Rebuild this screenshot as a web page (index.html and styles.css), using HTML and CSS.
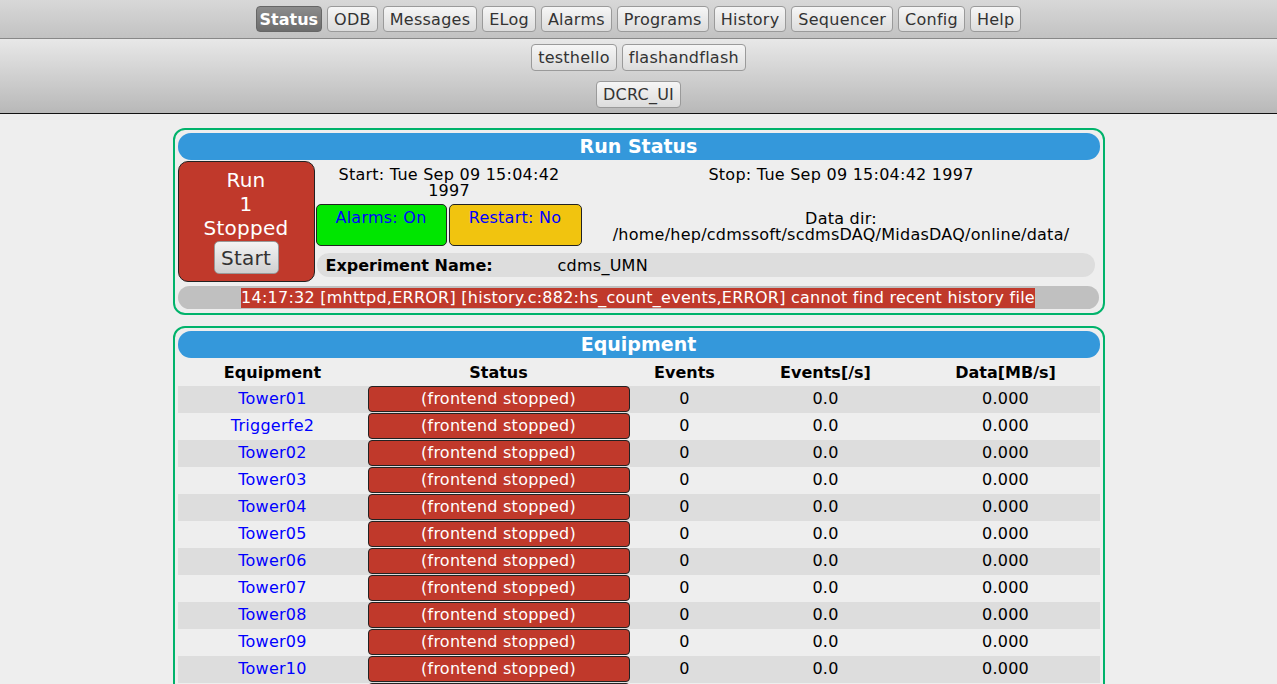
FILE: index.html
```html
<!DOCTYPE html>
<html>
<head>
<meta charset="utf-8">
<title>Status</title>
<link rel="stylesheet" href="styles.css">
</head>
<body>
<div class="header">
  <div class="navtop">
    <span class="nbtn active">Status</span>
    <span class="nbtn">ODB</span>
    <span class="nbtn">Messages</span>
    <span class="nbtn">ELog</span>
    <span class="nbtn">Alarms</span>
    <span class="nbtn">Programs</span>
    <span class="nbtn">History</span>
    <span class="nbtn">Sequencer</span>
    <span class="nbtn">Config</span>
    <span class="nbtn">Help</span>
  </div>
  <div class="navsub">
    <div class="navrow">
      <span class="nbtn sub">testhello</span>
      <span class="nbtn sub">flashandflash</span>
    </div>
    <div class="navrow">
      <span class="nbtn sub">DCRC_UI</span>
    </div>
  </div>
</div>

<div class="content">
  <div class="mtable">
    <div class="mheader">Run Status</div>
    <div class="rungrid">
      <div class="runbox">
        <div class="runtext">Run<br>1<br>Stopped</div>
        <span class="startbtn">Start</span>
      </div>
      <div class="cell starttime">Start: Tue Sep 09 15:04:42<br>1997</div>
      <div class="cell stoptime">Stop: Tue Sep 09 15:04:42 1997</div>
      <div class="flag alarms">Alarms: On</div>
      <div class="flag restart">Restart: No</div>
      <div class="cell datadir">Data dir:<br>/home/hep/cdmssoft/scdmsDAQ/MidasDAQ/online/data/</div>
      <div class="expname">
        <span class="explabel">Experiment Name:</span>
        <span class="expvalue">cdms_UMN</span>
      </div>
      <div class="msgrow"><span class="msgerr">14:17:32 [mhttpd,ERROR] [history.c:882:hs_count_events,ERROR] cannot find recent history file</span></div>
    </div>
  </div>

  <div class="mtable eqtable">
    <div class="mheader">Equipment</div>
    <div class="eqgrid">
      <div class="eqrow eqhead">
        <div>Equipment</div><div>Status</div><div>Events</div><div>Events[/s]</div><div>Data[MB/s]</div>
      </div>
      <div class="eqrow odd"><div><a class="eqlink">Tower01</a></div><div><span class="stopped">(frontend stopped)</span></div><div>0</div><div>0.0</div><div>0.000</div></div>
      <div class="eqrow"><div><a class="eqlink">Triggerfe2</a></div><div><span class="stopped">(frontend stopped)</span></div><div>0</div><div>0.0</div><div>0.000</div></div>
      <div class="eqrow odd"><div><a class="eqlink">Tower02</a></div><div><span class="stopped">(frontend stopped)</span></div><div>0</div><div>0.0</div><div>0.000</div></div>
      <div class="eqrow"><div><a class="eqlink">Tower03</a></div><div><span class="stopped">(frontend stopped)</span></div><div>0</div><div>0.0</div><div>0.000</div></div>
      <div class="eqrow odd"><div><a class="eqlink">Tower04</a></div><div><span class="stopped">(frontend stopped)</span></div><div>0</div><div>0.0</div><div>0.000</div></div>
      <div class="eqrow"><div><a class="eqlink">Tower05</a></div><div><span class="stopped">(frontend stopped)</span></div><div>0</div><div>0.0</div><div>0.000</div></div>
      <div class="eqrow odd"><div><a class="eqlink">Tower06</a></div><div><span class="stopped">(frontend stopped)</span></div><div>0</div><div>0.0</div><div>0.000</div></div>
      <div class="eqrow"><div><a class="eqlink">Tower07</a></div><div><span class="stopped">(frontend stopped)</span></div><div>0</div><div>0.0</div><div>0.000</div></div>
      <div class="eqrow odd"><div><a class="eqlink">Tower08</a></div><div><span class="stopped">(frontend stopped)</span></div><div>0</div><div>0.0</div><div>0.000</div></div>
      <div class="eqrow"><div><a class="eqlink">Tower09</a></div><div><span class="stopped">(frontend stopped)</span></div><div>0</div><div>0.0</div><div>0.000</div></div>
      <div class="eqrow odd"><div><a class="eqlink">Tower10</a></div><div><span class="stopped">(frontend stopped)</span></div><div>0</div><div>0.0</div><div>0.000</div></div>
      <div class="eqrow"><div><a class="eqlink">Tower11</a></div><div><span class="stopped">(frontend stopped)</span></div><div>0</div><div>0.0</div><div>0.000</div></div>
      <div class="eqrow odd"><div><a class="eqlink">Tower12</a></div><div><span class="stopped">(frontend stopped)</span></div><div>0</div><div>0.0</div><div>0.000</div></div>
    </div>
  </div>
</div>
</body>
</html>
```

FILE: styles.css
```css
html, body {
  margin: 0;
  padding: 0;
}
body {
  background: #eeeeee;
  font-family: "DejaVu Sans", Verdana, sans-serif;
  font-size: 16px;
  letter-spacing: 0.25px;
  color: #000;
}

/* ---------- header ---------- */
.header {
  border-bottom: 1px solid #111;
}
.navtop {
  display: flex;
  justify-content: center;
  gap: 5px;
  height: 39px;
  box-sizing: border-box;
  padding-top: 6px;
  background: linear-gradient(#d8d8d8, #c2c2c2);
  border-bottom: 1px solid #888;
}
.navsub {
  display: flex;
  flex-direction: column;
  gap: 10px;
  padding: 5px 0 5px;
  height: 74px;
  box-sizing: border-box;
  background: linear-gradient(#e8e8e8, #b8b8b8);
}
.navrow {
  display: flex;
  justify-content: center;
  gap: 5px;
}
.nbtn {
  display: inline-flex;
  align-items: center;
  height: 26px;
  box-sizing: border-box;
  padding: 0 6px;
  border: 1px solid #9a9a9a;
  border-radius: 4px;
  background: linear-gradient(#f6f6f6, #dcdcdc);
  color: #333;
  font-size: 16px;
}
.nbtn.sub {
  height: 27px;
}
.nbtn.active {
  background: linear-gradient(#8c8c8c, #6c6c6c);
  border-color: #666;
  color: #fff;
  font-weight: bold;
  letter-spacing: 0;
  padding: 0 3px;
}

/* ---------- content ---------- */
.content {
  width: 932px;
  margin: 14px auto 0;
  display: flex;
  flex-direction: column;
  gap: 11px;
}
.mtable {
  border: 2px solid #00b36b;
  border-radius: 12px;
  padding: 3px 3px 4px;
}
.mheader {
  background: #3498db;
  color: #fff;
  font-weight: bold;
  font-size: 19px;
  letter-spacing: 0;
  height: 27px;
  line-height: 27px;
  text-align: center;
  border-radius: 13px;
}

/* run status */
.rungrid {
  display: grid;
  grid-template-columns: 137px 130px 133px 1fr;
  grid-template-rows: 41px 42px 34px auto;
  column-gap: 2px;
  row-gap: 2px;
  margin-top: 1px;
  margin-right: 1px;
}
.runbox {
  grid-column: 1;
  grid-row: 1 / span 3;
  background: #c0392b;
  border: 1px solid #222;
  border-radius: 10px;
  color: #fff;
  font-size: 20px;
  display: flex;
  flex-direction: column;
  align-items: center;
  padding-top: 6px;
  box-sizing: border-box;
}
.runtext {
  text-align: center;
  line-height: 24px;
}
.startbtn {
  display: inline-flex;
  align-items: center;
  justify-content: center;
  width: 65px;
  height: 33px;
  box-sizing: border-box;
  margin-top: 1px;
  border: 1px solid #999;
  border-radius: 5px;
  background: linear-gradient(#f4f4f4, #cfcfcf);
  color: #333;
  font-size: 20px;
}
.cell {
  text-align: center;
  line-height: 16px;
  padding-top: 6px;
}
.starttime {
  grid-column: 2 / span 2;
  grid-row: 1;
}
.stoptime {
  grid-column: 4;
  grid-row: 1;
}
.datadir {
  grid-column: 4;
  grid-row: 2;
  padding-top: 7px;
}
.flag {
  grid-row: 2;
  border: 1px solid #222;
  border-radius: 5px;
  color: #0000ff;
  text-align: center;
  padding-top: 4px;
  line-height: 18px;
  box-sizing: border-box;
}
.alarms {
  grid-column: 2;
  background: #00e600;
  margin-left: -1px;
}
.restart {
  grid-column: 3;
  background: #f1c40f;
}
.expname {
  grid-column: 2 / span 3;
  grid-row: 3;
  align-self: start;
  margin-top: 5px;
  margin-right: 4px;
  height: 24px;
  background: #dddddd;
  border-radius: 12px;
  display: flex;
  align-items: center;
  padding-left: 9px;
}
.explabel {
  font-weight: bold;
  letter-spacing: 0;
  width: 232px;
}
.msgrow {
  grid-column: 1 / span 4;
  grid-row: 4;
  margin-top: 2px;
  height: 23px;
  background: #c0c0c0;
  border-radius: 12px;
  display: flex;
  align-items: center;
  justify-content: center;
}
.msgerr {
  background: #c0392b;
  color: #fff;
  line-height: 20px;
}

/* equipment */
.eqgrid {
  display: flex;
  flex-direction: column;
}
.eqrow {
  display: grid;
  grid-template-columns: 190px 262px 110px 172px 1fr;
  height: 27px;
  align-items: start;
  text-align: center;
  line-height: 26px;
}
.eqrow.odd {
  background: #dddddd;
}
.eqhead {
  font-weight: bold;
  letter-spacing: 0;
  height: 26px;
  margin-top: 2px;
}
.eqlink {
  color: #0000ff;
}
.stopped {
  display: block;
  height: 26px;
  box-sizing: border-box;
  border: 1px solid #222;
  border-radius: 4px;
  background: #c0392b;
  color: #fff;
  line-height: 24px;
}
```
